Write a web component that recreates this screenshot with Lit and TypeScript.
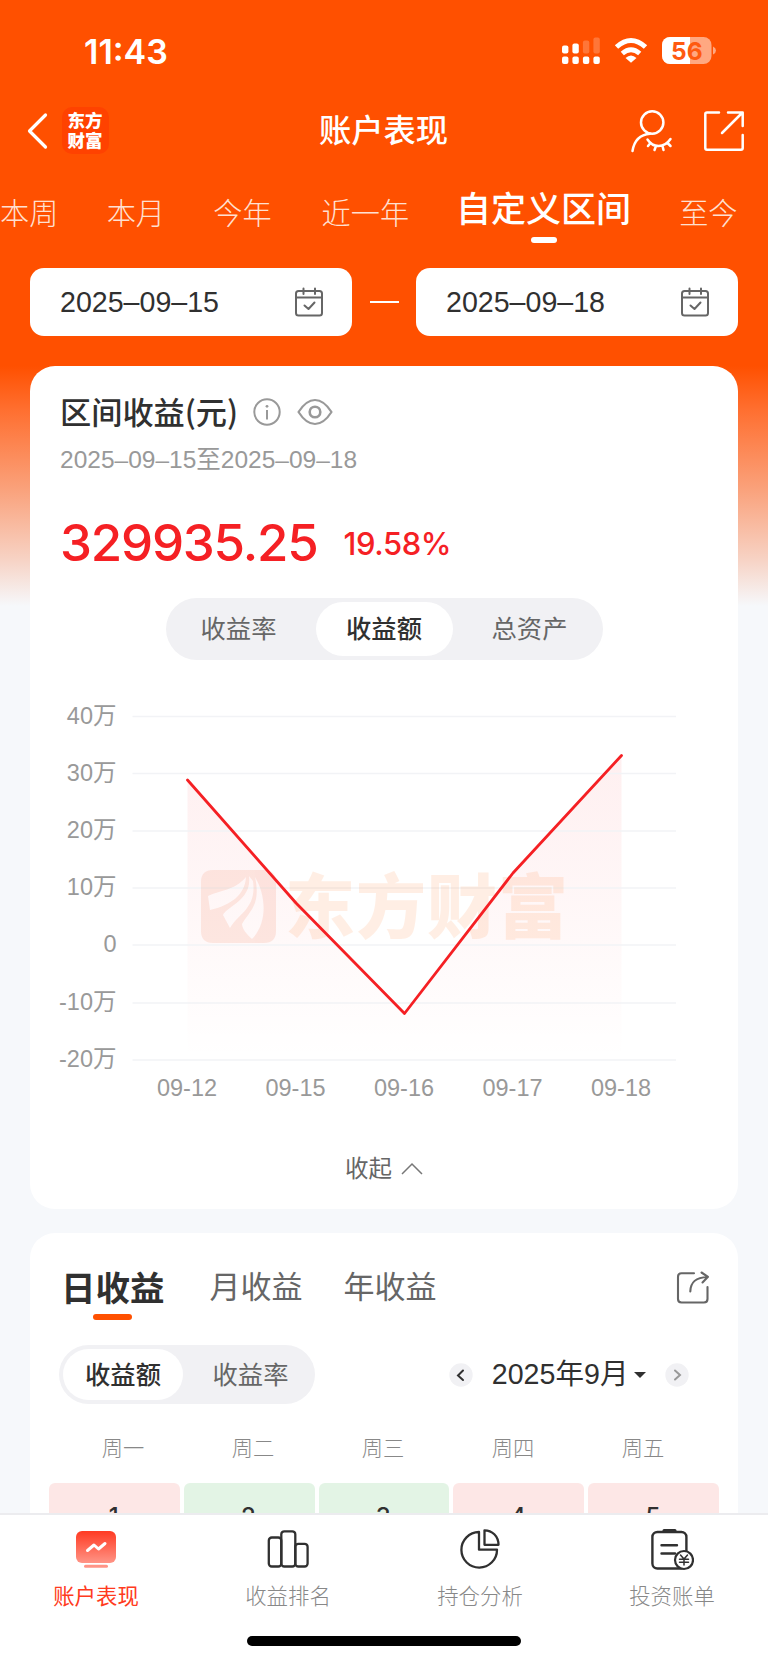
import { LitElement, html, css, svg } from "lit";
import { customElement, state } from "lit/decorators.js";
import { classMap } from "lit/directives/class-map.js";

const GRID = [
  { label: "40万", y: 716.5 },
  { label: "30万", y: 773.5 },
  { label: "20万", y: 831 },
  { label: "10万", y: 888 },
  { label: "0", y: 945 },
  { label: "-10万", y: 1003 },
  { label: "-20万", y: 1060 },
];

const POINTS = [
  { day: "09-12", x: 187.5, y: 780 },
  { day: "09-15", x: 296, y: 903 },
  { day: "09-16", x: 404.5, y: 1013.5 },
  { day: "09-17", x: 513, y: 873 },
  { day: "09-18", x: 621.5, y: 755.5 },
];

@customElement("profit-chart")
class ProfitChart extends LitElement {
  static styles = css`
    :host { display: block; height: 430px; }
    svg { display: block; }
    text { font-family: "Liberation Sans", "Noto Sans CJK SC", sans-serif; }
    .axis { font-size: 23.5px; fill: #999; }
    .day { font-size: 23.5px; fill: #999; }
    .mark { font-family: "Noto Sans CJK SC", sans-serif; font-size: 70px; font-weight: 900; fill: #f60; letter-spacing: 1px; }
  `;
  render() {
    const line = POINTS.map((p) => `${p.x},${p.y}`).join(" ");
    return html`<svg width="708" height="430" viewBox="30 690 708 430">
      <defs>
        <linearGradient id="fade" x1="0" y1="755" x2="0" y2="1060" gradientUnits="userSpaceOnUse">
          <stop offset="0" stop-color="#f91f28" stop-opacity=".07" />
          <stop offset="1" stop-color="#f91f28" stop-opacity="0" />
        </linearGradient>
      </defs>
      <polygon points="187.5,1060 ${line} 621.5,1060" fill="url(#fade)" />
      ${GRID.map((g) => svg`
        <line x1="132.5" x2="676" y1=${g.y} y2=${g.y} stroke="#f2f3f6" stroke-width="1.6" />
        <text class="axis" x="116.5" y=${g.y + 7} text-anchor="end">${g.label}</text>`)}
      <g opacity=".1">
        <path fill="#f0410a" fill-rule="evenodd" d="M213 870H264Q276 870 276 882V931Q276 943 264 943H213Q201 943 201 931V882Q201 870 213 870ZM246 877C234 891 220 890 208 896L210 910C231 905 245 895 246 877ZM249 876C252 900 227 906 223 915L230 928C238 914 257 908 253 881ZM255 877C266 895 268 923 252 939C246 934 242 928 242 924C250 910 261 905 255 877Z" />
        <text class="mark" x="285" y="933">东方财富</text>
      </g>
      <polyline points=${line} fill="none" stroke="#f52024" stroke-width="2.8" stroke-linejoin="round" stroke-linecap="round" />
      ${POINTS.map((p) => svg`<text class="day" x=${p.x - 0.5} y="1096" text-anchor="middle">${p.day}</text>`)}
    </svg>`;
  }
}

@customElement("app-root")
class AppRoot extends LitElement {
  @state() private range = "自定义区间";
  @state() private mode = "收益额";

  static styles = css`
    :host {
      display: flex; flex-direction: column; width: 768px; height: 1663px; overflow: hidden;
      background: linear-gradient(#ff5000 0, #ff5000 366px, #ff6f30 410px, #faa27c 490px, #f7d3c5 560px, #f6f8fb 606px);
      color: #303030; font-family: "Liberation Sans", "Noto Sans CJK SC", sans-serif;
      box-sizing: border-box; font-size: 25px; line-height: 1;
    }
    * { box-sizing: border-box; }
    svg { display: block; flex: none; }
    .scroll { flex: 1; min-height: 0; overflow: hidden; display: flex; flex-direction: column; }
    .scroll > * { flex: none; }
    .status { height: 92px; padding: 35px 52px 0 84px; display: flex; justify-content: space-between; align-items: flex-start; color: #fff; }
    .time { font: 600 34px/34px Inter, sans-serif; }
    .nav { height: 77px; display: grid; grid-template-columns: 1fr auto 1fr; align-items: center; padding: 0 23px 0 27px; color: #fff; }
    .left { display: flex; align-items: center; gap: 14px; }
    .logo { width: 47px; height: 47px; border-radius: 10px; background: #ff4200; padding: 3px 0 0 5.5px; font: 900 17.5px/19.5px "Noto Sans CJK SC", sans-serif; }
    .title { font: 500 32.3px/40px "Noto Sans CJK SC", sans-serif; padding: 0 5px 6px 0; }
    .right { display: flex; justify-content: flex-end; align-items: center; gap: 30px; }
    .ranges { height: 99px; display: flex; gap: 48.3px; padding-top: 22px; white-space: nowrap; font: 300 29.2px/40px "Noto Sans CJK SC", sans-serif; color: #ffe0d2; }
    .range:nth-child(4) { margin: 0 -1.5px 0 1.5px; }
    .range.on { font-size: 35px; font-weight: 500; color: #fff; display: flex; flex-direction: column; align-items: center; margin-top: -4px; }
    .range.on::after { content: ""; width: 26px; height: 6px; border-radius: 3px; background: #fff; margin: 10px 0 0 2px; }
    .dates { height: 68px; margin: 0 30px; display: flex; align-items: center; justify-content: space-between; }
    .date { width: 322px; height: 68px; border-radius: 14px; background: #fff; padding: 0 28px 0 30px; display: flex; align-items: center; justify-content: space-between; font-size: 28.6px; }
    .dash { width: 29px; height: 2px; background: #fff; }
    .card { background: #fff; border-radius: 25px; margin: 0 30px; }
    .profit { margin-top: 30px; height: 843px; display: flex; flex-direction: column; }
    .head { height: 40px; margin: 26px 0 0 30px; display: flex; align-items: center; }
    .head b { font: 500 31.2px/40px "Noto Sans CJK SC", sans-serif; margin-right: 15px; padding-bottom: 3px; }
    .head svg + svg { margin-left: 16px; }
    .span { margin: 14px 0 0 30px; font-size: 24.5px; line-height: 28px; color: #999; }
    .sum { height: 63px; margin: 37px 0 0 30px; display: flex; align-items: center; font: 500 51px/60px Inter, sans-serif; color: #f52024; letter-spacing: -1.2px; }
    .sum small { font-size: 31px; margin-left: 26px; letter-spacing: -.4px; padding-top: 3px; }
    .seg { display: flex; background: #f1f1f4; border-radius: 32px; font: 400 25.3px/1 "Noto Sans CJK SC", sans-serif; color: #666; }
    .seg span { display: flex; align-items: center; justify-content: center; border-radius: 28px; padding-bottom: 3px; }
    .seg .on { background: #fff; color: #303030; font-weight: 500; }
    .seg3 { width: 437px; height: 62px; margin: 24px auto 0; padding: 4px; }
    .seg3 span { flex: 1; }
    .seg3 span:first-child { padding-right: 8px; }
    .seg3 span:last-child { padding-left: 8px; }
    .seg3 .on { flex: 0 0 137px; }
    profit-chart { margin-top: 30px; }
    .fold { display: flex; justify-content: center; align-items: center; gap: 9px; height: 34px; margin-top: 31px; font-family: "Noto Sans CJK SC", sans-serif; font-size: 23.5px; color: #666; }
    .calendar { margin-top: 24px; height: 500px; }
    .tabs { display: flex; height: 87px; padding: 27px 28px 0 31px; color: #666; font: 400 31px/50px "Noto Sans CJK SC", sans-serif; }
    .tabs .on { color: #303030; font-weight: 700; font-size: 34.5px; display: flex; flex-direction: column; align-items: center; line-height: 52px; }
    .tabs .on::after { content: ""; width: 39px; height: 6px; border-radius: 3px; background: #ff5000; margin-top: 2px; }
    .tabs span:nth-child(2) { margin-left: 45px; }
    .tabs span:nth-child(3) { margin-left: 41px; }
    .tabs svg { margin: 10px 0 0 auto; }
    .tools { display: flex; align-items: center; justify-content: space-between; margin-top: 25px; padding: 0 49px 0 29px; }
    .seg2 { width: 256px; height: 59px; padding: 4px; }
    .seg2 span { width: 120px; padding-bottom: 1px; }
    .seg2 span + span { width: 128px; padding-left: 7px; }
    .month { display: flex; align-items: center; font-size: 28.6px; }
    .caret { border: 6.5px solid transparent; border-top: 6.5px solid #303030; border-bottom: 0; margin: 0 19.5px 0 5px; }
    .text { margin-left: 19px; }
    .weeks { display: grid; grid-template-columns: repeat(5, 130px); margin: 27.5px 0 0 28px; text-align: center; font: 300 21.3px/30px "Noto Sans CJK SC", sans-serif; color: #888; }
    .cells { display: grid; grid-template-columns: repeat(5, 1fr); gap: 4px; margin: 21.5px 19px 0; }
    .cell { height: 110px; border-radius: 6px; background: #fde7e6; text-align: center; padding: 18.5px 1.5px 0 0; font: 500 24px/30px Inter, sans-serif; }
    .cell.down { background: #e3f4e5; }
    .bar { flex: none; height: 150px; background: #fff; border-top: 2px solid #ececef; display: flex; flex-direction: column; align-items: center; }
    .items { display: grid; grid-template-columns: repeat(4, 1fr); width: 100%; }
    .item { display: flex; flex-direction: column; align-items: center; padding-top: 13px; gap: 7px; font: 300 21.4px/32px "Noto Sans CJK SC", sans-serif; color: #888; }
    .item.on { color: #ff3a20; font-weight: 400; }
    .home { width: 274px; height: 10px; border-radius: 5px; background: #000; margin-top: 25px; }
  `;

  private calendarIcon() {
    return html`<svg width="30" height="30" viewBox="0 0 30 30" fill="none" stroke="#666" stroke-width="2" stroke-linecap="round" stroke-linejoin="round">
      <rect x="2" y="4" width="26" height="24.5" rx="2.5" /><path d="M2 10.5H28M9.5 1.5V7M21 1.5V7M10.5 18.5L14.5 22L20.5 15.5" /></svg>`;
  }

  render() {
    const ranges = ["本周", "本月", "今年", "近一年", "自定义区间", "至今"];
    const modes = ["收益率", "收益额", "总资产"];
    return html`
      <div class="scroll">
        <div class="status">
          <span class="time">11:43</span>
          <svg width="154" height="30" viewBox="562 35.5 154 30">
            <g fill="#fff"><rect x="562" y="57" width="6.4" height="7.4" rx="2" /><rect x="572.4" y="57" width="6.4" height="7.4" rx="2" /><rect x="582.9" y="57" width="6.4" height="7.4" rx="2" /><rect x="593.4" y="57" width="6.4" height="7.4" rx="2" />
            <rect x="562" y="46" width="6.4" height="8" rx="2" /><rect x="572.4" y="44" width="6.4" height="10" rx="2" />
            <rect x="582.9" y="41" width="6.4" height="13" rx="2" opacity=".22" /><rect x="593.4" y="38" width="6.4" height="16" rx="2" opacity=".22" /></g>
            <g fill="none" stroke="#fff" stroke-width="5"><path d="M616.5 47.5Q631 34.5 645.5 47.5" /><path d="M622.3 54Q631 46.5 639.7 54" stroke-width="4.8" /></g>
            <path d="M625.5 58.5Q631 53.5 636.5 58.5L631 63.3Z" fill="#fff" />
            <defs><clipPath id="shell"><rect x="662" y="37.5" width="49.5" height="27" rx="8" /></clipPath></defs>
            <g clip-path="url(#shell)"><rect x="662" y="37" width="50" height="28" fill="#ffa881" /><rect x="662" y="37" width="28" height="28" fill="#fff" /></g>
            <path d="M713 47Q716 48.5 716 51T713 55Z" fill="#ffa881" />
            <text x="686.8" y="60" text-anchor="middle" font-family="Inter" font-weight="700" font-size="24.5" fill="#ff5a10">56</text>
          </svg>
        </div>
        <div class="nav">
          <div class="left">
            <svg width="21" height="38" viewBox="0 0 21 38" fill="none" stroke="#fff" stroke-width="3.2" stroke-linecap="round" stroke-linejoin="round"><path d="M18.5 3L2.5 19L18.5 35" /></svg>
            <div class="logo">东方<br />财富</div>
          </div>
          <div class="title">账户表现</div>
          <div class="right">
            <svg width="42" height="44" viewBox="631 108 42 44" fill="none" stroke="#fff" stroke-width="2.5" stroke-linecap="round" stroke-linejoin="round">
              <circle cx="652.2" cy="121.5" r="11.2" /><path d="M632.5 150Q635 134 650 132.7M647.5 138.5C653 147 664 147.5 670.5 138M650.5 142L648 145M656 145L654.5 149M662.5 145L663.5 149M667.5 142L670.5 145" /></svg>
            <svg width="42" height="42" viewBox="703 109 42 42" fill="none" stroke="#fff" stroke-width="2.5" stroke-linecap="round" stroke-linejoin="round">
              <path d="M719 111.5H707Q705.3 111.5 705.3 113V147Q705.3 148.7 707 148.7H741Q742.7 148.7 742.7 147V134M728 111.5H742.7V125M742 112L722 132" /></svg>
          </div>
        </div>
        <div class="ranges">
          ${ranges.map((r) => html`<span class=${classMap({ range: true, on: r === this.range })} @click=${() => (this.range = r)}>${r}</span>`)}
        </div>
        <div class="dates">
          <div class="date">2025–09–15 ${this.calendarIcon()}</div>
          <i class="dash"></i>
          <div class="date">2025–09–18 ${this.calendarIcon()}</div>
        </div>
        <section class="card profit">
          <div class="head">
            <b>区间收益(元)</b>
            <svg width="28" height="28" viewBox="0 0 28 28" fill="none" stroke="#999" stroke-width="2"><circle cx="14" cy="14" r="12.7" /><path d="M14 12V21.5" /><circle cx="14" cy="8.3" r="1.4" fill="#999" stroke="none" /></svg>
            <svg width="36" height="28" viewBox="0 0 36 28" fill="none" stroke="#999" stroke-width="2.2" stroke-linejoin="round"><path d="M1.5 14C6 7 11.5 2 18 2S30 7 34.5 14C30 21 24.5 26 18 26S6 21 1.5 14Z" /><circle cx="18" cy="14" r="5.3" stroke-width="2.6" /></svg>
          </div>
          <div class="span">2025–09–15至2025–09–18</div>
          <div class="sum">329935.25<small>19.58%</small></div>
          <div class="seg seg3">
            ${modes.map((m) => html`<span class=${classMap({ on: m === this.mode })} @click=${() => (this.mode = m)}>${m}</span>`)}
          </div>
          <profit-chart></profit-chart>
          <div class="fold">收起
            <svg width="22" height="13" viewBox="0 0 22 13" fill="none" stroke="#777" stroke-width="1.5"><path d="M1 12L11 2L21 12" /></svg>
          </div>
        </section>
        <section class="card calendar">
          <div class="tabs">
            <span class="on">日收益</span><span>月收益</span><span>年收益</span>
            <svg width="34" height="34" viewBox="676 1270 34 34" fill="none" stroke="#666" stroke-width="2.1" stroke-linecap="round" stroke-linejoin="round">
              <path d="M694 1273.3H681.5Q678 1273.3 678 1276.8V1299Q678 1302.5 681.5 1302.5H704Q707.5 1302.5 707.5 1299V1287M690.3 1291.5C690.5 1281 697 1277.5 707.5 1277M701.5 1272.5L708 1276.8L702.5 1282.5" /></svg>
          </div>
          <div class="tools">
            <div class="seg seg2"><span class="on">收益额</span><span>收益率</span></div>
            <div class="month">
              <svg width="24" height="24" viewBox="0 0 24 24"><circle cx="12" cy="12" r="11.7" fill="#f1f1f4" /><path d="M14 7.5L9 12.5L14 17" fill="none" stroke="#303030" stroke-width="2" stroke-linecap="round" /></svg>
              <span class="text">2025年9月</span><i class="caret"></i>
              <svg width="24" height="24" viewBox="0 0 24 24"><circle cx="12" cy="12" r="11.7" fill="#f1f1f4" /><path d="M10 7.5L15 12L10 16.5" fill="none" stroke="#999" stroke-width="2" stroke-linecap="round" /></svg>
            </div>
          </div>
          <div class="weeks">${["周一", "周二", "周三", "周四", "周五"].map((w) => html`<span>${w}</span>`)}</div>
          <div class="cells">
            ${[1, 2, 3, 4, 5].map((d) => html`<div class=${classMap({ cell: true, down: d === 2 || d === 3 })}>${d}</div>`)}
          </div>
        </section>
      </div>
      <nav class="bar">
        <div class="items">
          <div class="item on">
            <svg width="44" height="44" viewBox="74 1528 44 44"><defs><linearGradient id="red" x1="0" y1="0" x2="0" y2="1"><stop offset="0" stop-color="#ff3a22" /><stop offset="1" stop-color="#ff9486" /></linearGradient></defs>
              <rect x="76" y="1531" width="40" height="32" rx="6" fill="url(#red)" /><rect x="84" y="1564.7" width="24" height="3" rx="1.5" fill="#ff9486" />
              <path d="M87.5 1550.5L94 1545L98.5 1549L105 1543.5" fill="none" stroke="#fff" stroke-width="3" stroke-linecap="round" stroke-linejoin="round" /></svg>
            账户表现
          </div>
          <div class="item">
            <svg width="44" height="44" viewBox="266 1528 44 44" fill="none" stroke="#303030" stroke-width="2.3"><rect x="268.8" y="1537.5" width="12.5" height="29" rx="3" /><rect x="281.3" y="1531.3" width="14" height="35.2" rx="3" /><rect x="295.3" y="1543.8" width="12.3" height="22.7" rx="3" /></svg>
            收益排名
          </div>
          <div class="item">
            <svg width="44" height="44" viewBox="458 1528 44 44" fill="none" stroke="#303030" stroke-width="2.3" stroke-linejoin="round"><path d="M479 1532A17.8 17.8 0 1 0 497 1549.7H479ZM484.5 1530.3V1544.8H498.5C498.5 1536 492 1530.3 484.5 1530.3Z" /></svg>
            持仓分析
          </div>
          <div class="item">
            <svg width="44" height="44" viewBox="650 1528 44 44" fill="none" stroke="#303030" stroke-width="2.4" stroke-linecap="round"><rect x="652.4" y="1532" width="34" height="36.5" rx="5" /><path d="M664 1530.5H675" stroke-width="3" /><path d="M661.5 1545.3H677M661.5 1553.5H675" /><circle cx="684" cy="1560" r="9" fill="#fff" stroke-width="2.2" /><path d="M680.5 1555L684 1559L687.5 1555M684 1559V1565M679.5 1559.2H688.5M679.5 1562.2H688.5" stroke-width="1.5" /></svg>
            投资账单
          </div>
        </div>
        <div class="home"></div>
      </nav>`;
  }
}
